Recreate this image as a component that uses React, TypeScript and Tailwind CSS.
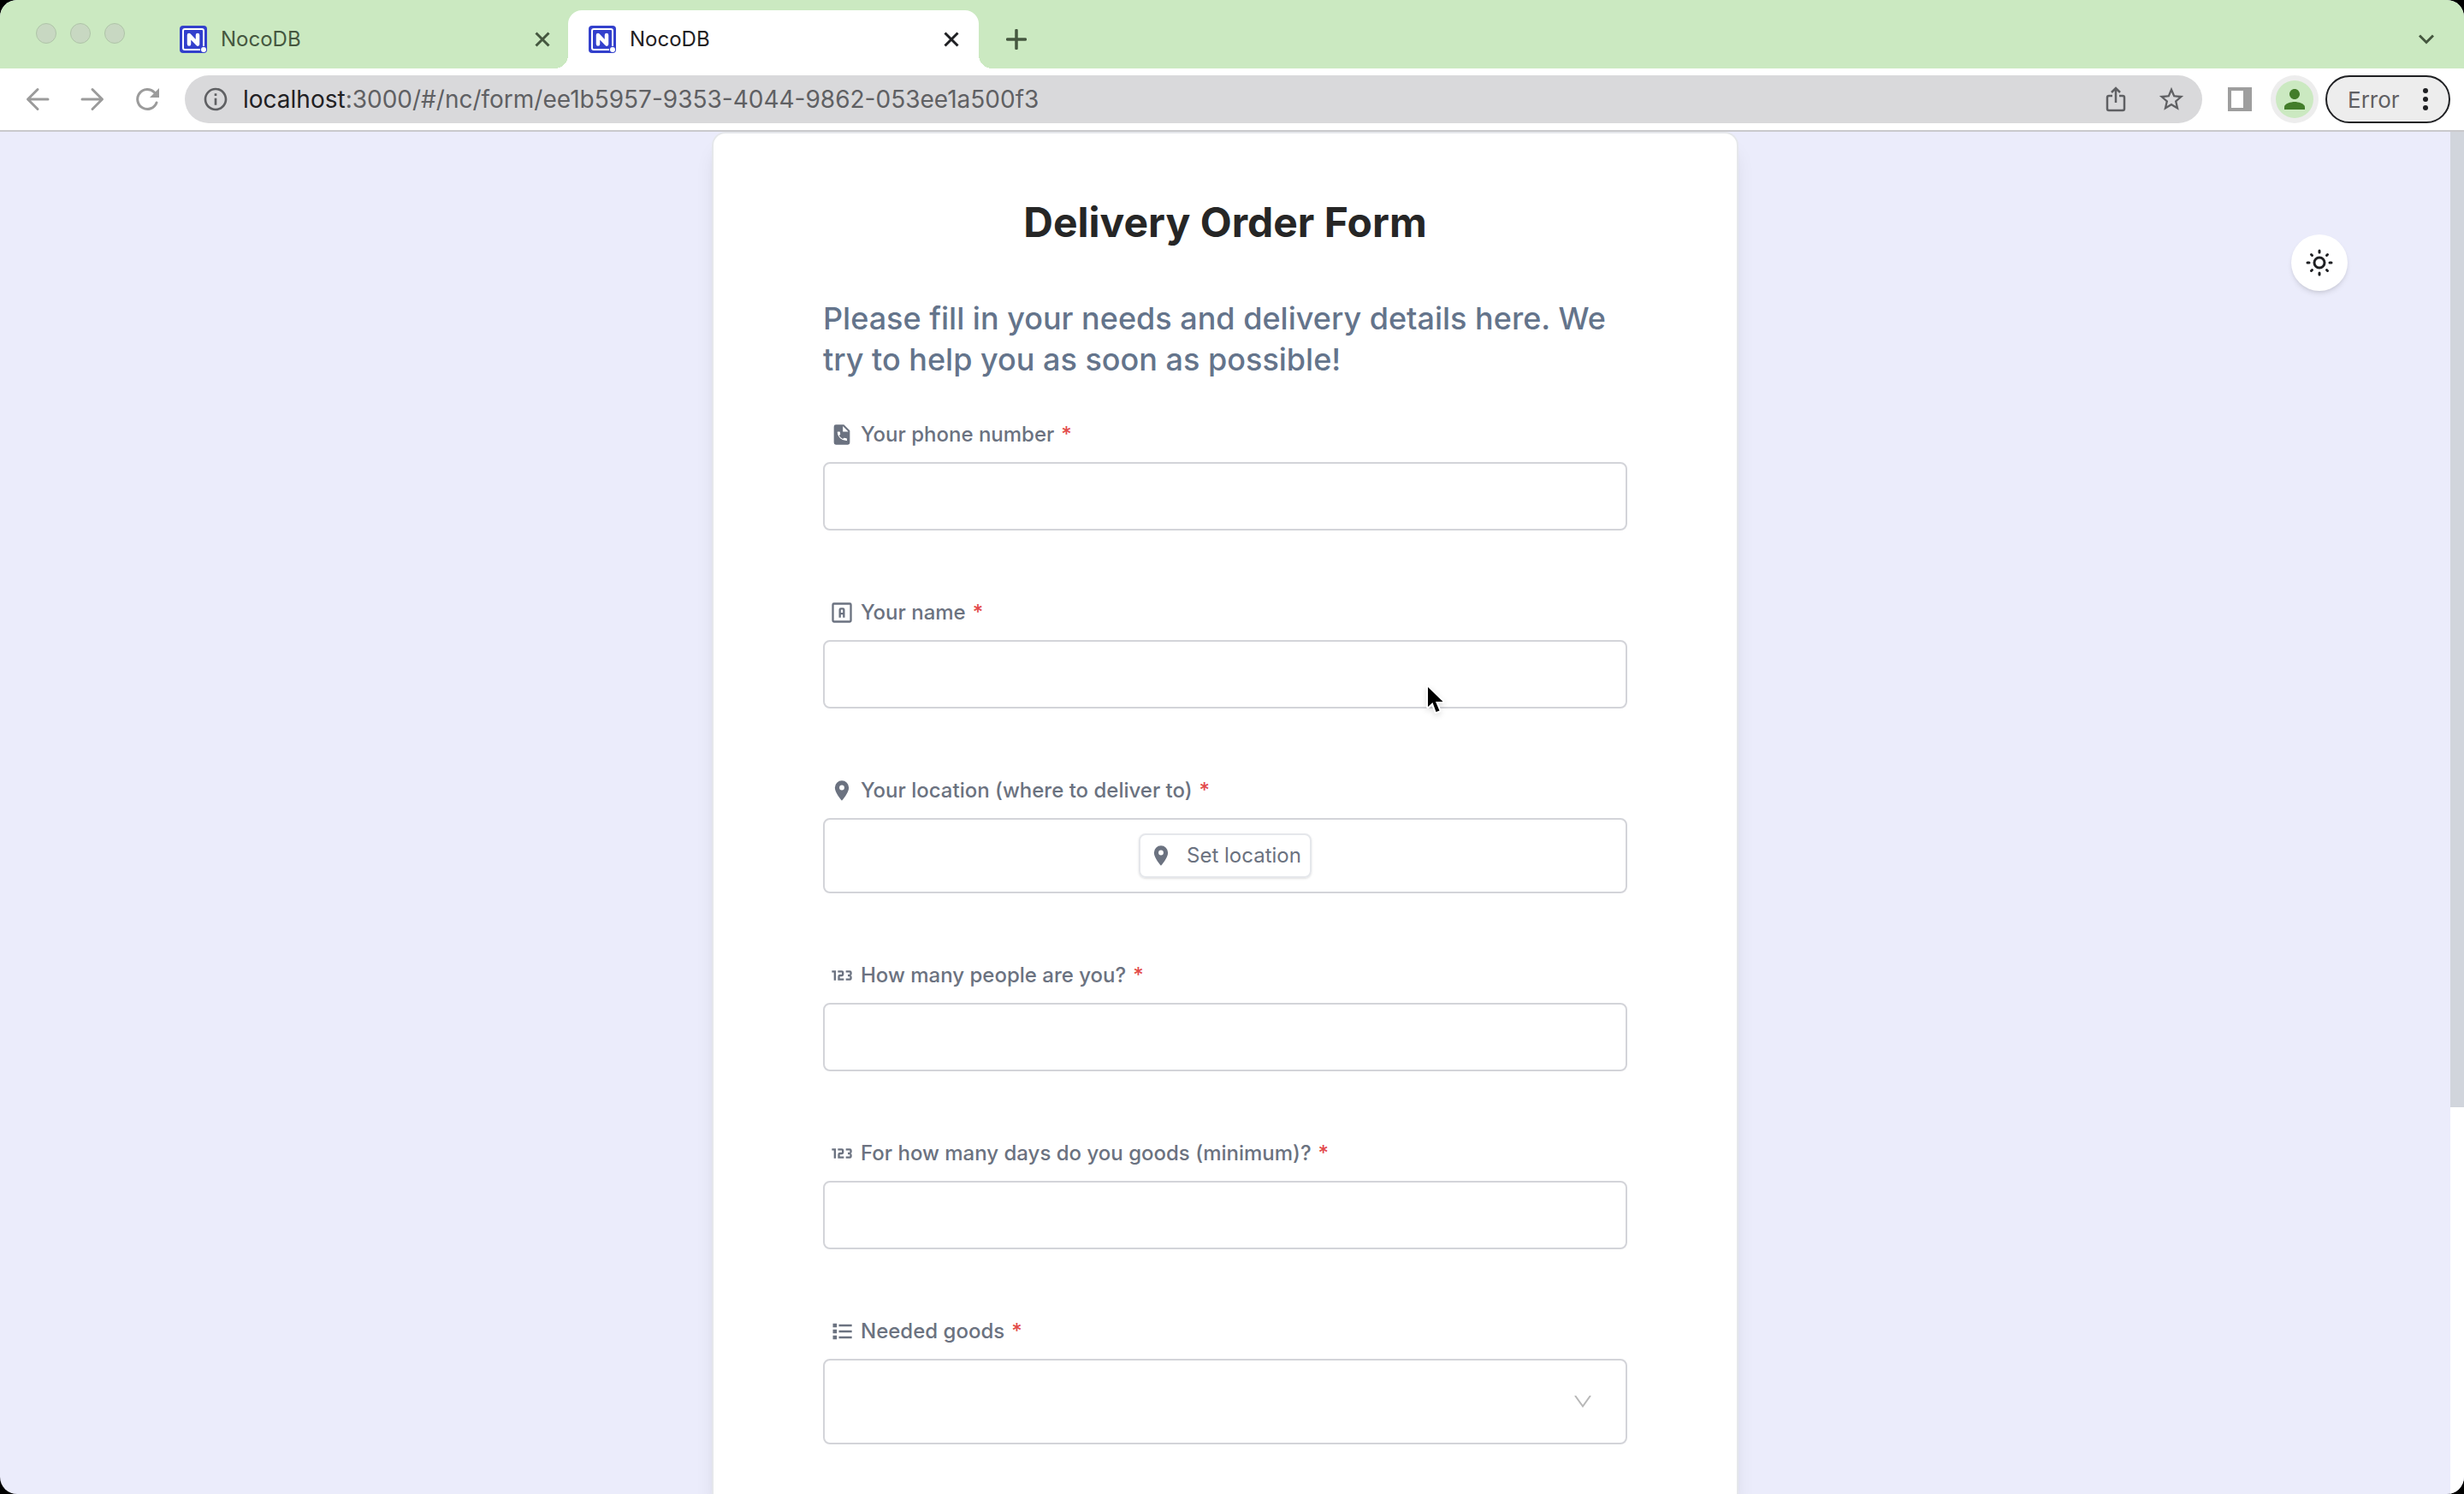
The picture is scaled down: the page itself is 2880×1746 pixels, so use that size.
import { useId } from "react";
import type { ReactNode } from "react";
import { MdOutlineInfo, MdPerson, MdStarBorder } from "react-icons/md";

function NocoLogo() {
  return (
    <svg viewBox="0 0 32 32" className="size-8 shrink-0" aria-hidden="true">
      <rect width="32" height="32" rx="4" fill="#3340cc" />
      <path d="M24 28H6a2 2 0 0 1-2-2V6a2 2 0 0 1 2-2h20a2 2 0 0 1 2 2v18" fill="none" stroke="#fff" strokeWidth="2" />
      <circle cx="28" cy="28" r="3" fill="#fff" />
      <path d="M11 21.500V11l10 10.500V11" fill="none" stroke="#fff" strokeWidth="4.500" strokeLinecap="round" strokeLinejoin="round" />
    </svg>
  );
}

function CloseIcon() {
  return (
    <svg viewBox="0 0 18 18" className="size-[18px]" aria-hidden="true">
      <path d="M1.500 1.500l15 15M16.500 1.500l-15 15" stroke="currentColor" strokeWidth="3" />
    </svg>
  );
}

function BackIcon() {
  return (
    <svg viewBox="0 0 40 40" className="size-10" fill="none" stroke="currentColor" strokeWidth="3" strokeLinecap="round" strokeLinejoin="round" aria-hidden="true">
      <path d="M32 20H9M20 8.500L8.500 20 20 31.500" />
    </svg>
  );
}

function ForwardIcon() {
  return (
    <svg viewBox="0 0 40 40" className="size-10" fill="none" stroke="currentColor" strokeWidth="3" strokeLinecap="round" strokeLinejoin="round" aria-hidden="true">
      <path d="M8 20h23M20 8.500L31.500 20 20 31.500" />
    </svg>
  );
}

function ReloadIcon() {
  return (
    <svg viewBox="0 0 40 40" className="size-10" aria-hidden="true">
      <path d="M31 24a11.500 11.500 0 1 1-2.500-12" fill="none" stroke="currentColor" strokeWidth="3" strokeLinecap="round" />
      <path d="M34 7v11H23z" fill="currentColor" />
    </svg>
  );
}

function Tab({ active = false }: { active?: boolean }) {
  return (
    <div
      className={
        active
          ? "relative flex w-[480px] items-center gap-4 rounded-t-2xl bg-white pr-[23px] pl-6 text-[#1f2023]"
          : "flex w-[478px] items-center gap-4 pr-[21px] pl-6 text-[#45573f]"
      }
    >
      {active && (
        <>
          <span className="absolute bottom-0 -left-4 size-4 bg-[radial-gradient(circle_at_0_0,#cbe9c1_16px,#fff_16px)]" />
          <span className="absolute -right-4 bottom-0 size-4 bg-[radial-gradient(circle_at_100%_0,#cbe9c1_16px,#fff_16px)]" />
        </>
      )}
      <NocoLogo />
      <span className="flex-1 text-2xl">NocoDB</span>
      <button aria-label="Close tab">
        <CloseIcon />
      </button>
    </div>
  );
}

function PhoneFileIcon() {
  return (
    <svg viewBox="0 0 24 24" className="size-7" aria-hidden="true">
      <path d="M14 2H6a2 2 0 0 0-2 2v16a2 2 0 0 0 2 2h12a2 2 0 0 0 2-2V8l-6-6m-1 1.500L18.500 9H13V3.500" fill="currentColor" fillRule="evenodd" />
      <path d="M17.200 17.500a.5.5 0 0 1-.5.5A9 9 0 0 1 7.500 9.500a.5.5 0 0 1 .5-.5h1.700c.28 0 .5.22.5.5 0 .62.100 1.220.29 1.780.05.18.010.38-.13.510l-1.100 1.100a8.300 8.300 0 0 0 3.700 3.500l1.100-1.100c.14-.14.34-.18.510-.12.560.18 1.160.28 1.780.28.28 0 .5.22.5.5z" fill="#fff" />
    </svg>
  );
}

function TextBoxIcon() {
  return (
    <svg viewBox="0 0 24 24" className="size-7" fill="none" stroke="currentColor" strokeWidth="2" aria-hidden="true">
      <rect x="3" y="3" width="18" height="18" rx="1" />
      <path d="M10 17V9a1 1 0 0 1 1-1h2a1 1 0 0 1 1 1v8M10 13h4" />
    </svg>
  );
}

function PinIcon() {
  return (
    <svg viewBox="0 0 24 24" className="size-7" fill="currentColor" aria-hidden="true">
      <path d="M12 11.500A2.500 2.500 0 0 1 9.500 9 2.500 2.500 0 0 1 12 6.500 2.500 2.500 0 0 1 14.500 9a2.500 2.500 0 0 1-2.500 2.500M12 2a7 7 0 0 0-7 7c0 5.250 7 13 7 13s7-7.750 7-13a7 7 0 0 0-7-7z" />
    </svg>
  );
}

function NumericIcon() {
  return (
    <svg viewBox="0 0 24 24" className="size-7" fill="currentColor" aria-hidden="true">
      <path d="M4 17V9H2V7h4v10H4m18-2a2 2 0 0 1-2 2h-4v-2h4v-2h-2v-2h2V9h-4V7h4a2 2 0 0 1 2 2v1.500a1.500 1.500 0 0 1-1.500 1.500 1.500 1.500 0 0 1 1.500 1.500V15m-8 0v2H8v-4a2 2 0 0 1 2-2h2V9H8V7h4a2 2 0 0 1 2 2v2a2 2 0 0 1-2 2h-2v2h4z" />
    </svg>
  );
}

function ListIcon() {
  return (
    <svg viewBox="0 0 24 24" className="size-7" fill="currentColor" aria-hidden="true">
      <path d="M3 4h4v4H3zM3 10h4v4H3zM3 16h4v4H3zM9 5h13v2H9zM9 11h13v2H9zM9 17h13v2H9z" />
    </svg>
  );
}

function FieldLabel({ id, htmlFor, icon, text }: { id?: string; htmlFor?: string; icon: ReactNode; text: string }) {
  return (
    <label id={id} htmlFor={htmlFor} className="flex h-8 items-center gap-2 pl-2 text-2xl font-medium text-[#6b7280]">
      {icon}
      <span>{text}</span>
      <span className="text-[#e34b4b]">*</span>
    </label>
  );
}

function TextField({ icon, text }: { icon: ReactNode; text: string }) {
  const id = useId();
  return (
    <div className="flex flex-col gap-4">
      <FieldLabel htmlFor={id} icon={icon} text={text} />
      <input id={id} type="text" className="h-20 w-full rounded-lg border-2 border-[#d3d4d9] bg-white px-6 text-2xl" />
    </div>
  );
}

function LocationField() {
  const id = useId();
  return (
    <div role="group" aria-labelledby={id} className="flex flex-col gap-4">
      <FieldLabel id={id} icon={<PinIcon />} text="Your location (where to deliver to)" />
      <div className="flex h-[88px] items-center justify-center rounded-lg border-2 border-[#d3d4d9]">
        <button className="flex h-[52px] w-[202px] items-center justify-center gap-4 rounded-lg border-2 border-gray-200 text-2xl text-[#6b7280] shadow-sm">
          <PinIcon />
          Set location
        </button>
      </div>
    </div>
  );
}

function GoodsField() {
  const id = useId();
  return (
    <div className="flex flex-col gap-4">
      <FieldLabel htmlFor={id} icon={<ListIcon />} text="Needed goods" />
      <div className="relative">
        <select id={id} className="h-[100px] w-full appearance-none rounded-lg border-2 border-[#d3d4d9] bg-white px-6 text-2xl" />
        <svg
          viewBox="0 0 20 14"
          className="pointer-events-none absolute top-[43px] right-[42px] h-[14px] w-5"
          fill="none"
          stroke="#b8b8b8"
          strokeWidth="2"
          aria-hidden="true"
        >
          <path d="M1 0l9 12.500L19 0" />
        </svg>
      </div>
    </div>
  );
}

function BrowserBar() {
  return (
    <header className="shrink-0">
      <div className="flex h-20 bg-[#cbe9c1] pt-3 pl-[42px]">
        <div className="flex gap-4 pt-[15px]">
          <span className="size-6 rounded-full border border-[#afc4a8] bg-[#c8d8c2]" />
          <span className="size-6 rounded-full border border-[#afc4a8] bg-[#c8d8c2]" />
          <span className="size-6 rounded-full border border-[#afc4a8] bg-[#c8d8c2]" />
        </div>
        <div className="ml-10 flex">
          <Tab />
          <Tab active />
        </div>
        <button aria-label="New tab" className="ml-8 text-[#45573f]">
          <svg viewBox="0 0 24 24" className="size-6" aria-hidden="true">
            <path d="M12 1.500v21M1.500 12h21" stroke="currentColor" strokeWidth="3.500" strokeLinecap="round" />
          </svg>
        </button>
        <button aria-label="Search tabs" className="mr-[35px] ml-auto text-[#45573f]">
          <svg viewBox="0 0 18 12" className="h-3 w-[18px]" fill="none" aria-hidden="true">
            <path d="M1 1.500l8 8 8-8" stroke="currentColor" strokeWidth="3" />
          </svg>
        </button>
      </div>

      <div className="flex h-[74px] items-center border-b-2 border-[#c9c9cc] bg-white pr-4 pl-6">
        <nav className="flex gap-6 text-[#9b9b9b]">
          <button aria-label="Back"><BackIcon /></button>
          <button aria-label="Forward"><ForwardIcon /></button>
          <button aria-label="Reload"><ReloadIcon /></button>
        </nav>
        <div className="ml-6 flex h-14 flex-1 items-center gap-4 rounded-full bg-[#d9d9db] pr-[19px] pl-5 text-[28px] text-[#5f6063]">
          <MdOutlineInfo className="size-8 shrink-0" />
          <p className="flex-1">
            <span className="text-[#1f2023]">localhost</span>:3000/#/nc/form/ee1b5957-9353-4044-9862-053ee1a500f3
          </p>
          <button aria-label="Share" className="mr-5">
            <svg viewBox="0 0 24 32" className="h-8 w-6" fill="none" stroke="currentColor" strokeWidth="2.500" aria-hidden="true">
              <path d="M8 12H4a2 2 0 0 0-2 2v13a2 2 0 0 0 2 2h16a2 2 0 0 0 2-2V14a2 2 0 0 0-2-2h-4M12 20V3M7 8l5-5 5 5" />
            </svg>
          </button>
          <button aria-label="Bookmark" className="text-[34px]"><MdStarBorder /></button>
        </div>
        <button aria-label="Side panel" className="ml-[30px] h-7 w-7 border-4 border-r-[10px] border-[#9e9e9e]" />
        <button aria-label="Profile" className="ml-[22px] flex size-14 items-center justify-center rounded-full bg-[#ededed]">
          <span className="flex size-11 items-center justify-center rounded-full bg-[#cbe9c1] text-4xl text-[#437d2b]">
            <MdPerson />
          </span>
        </button>
        <button className="ml-2 flex h-14 w-[146px] items-center justify-between rounded-full border-2 border-[#1f2023] bg-[#ededed] pr-6 pl-6 text-[26px] text-[#5f6063]">
          Error
          <span className="flex flex-col gap-1">
            <span className="size-1.5 rounded-full bg-[#1f2023]" />
            <span className="size-1.5 rounded-full bg-[#1f2023]" />
            <span className="size-1.5 rounded-full bg-[#1f2023]" />
          </span>
        </button>
      </div>
    </header>
  );
}

export default function App() {
  return (
    <div className="h-screen bg-black font-[Inter,sans-serif]">
      <div className="relative flex h-full flex-col overflow-hidden rounded-[20px] bg-[#ebecfb]">
        <BrowserBar />
        <div className="flex min-h-0 flex-1">
          <main className="flex-1 overflow-hidden">
            <form className="mx-auto flex h-full w-[1200px] max-w-full flex-col rounded-t-2xl border-2 border-b-0 border-gray-200 bg-white px-32 pt-[72px] shadow-xl">
              <h1 className="text-center text-5xl leading-[64px] font-bold text-[#262626]">Delivery Order Form</h1>
              <p className="mt-14 text-4xl leading-[48px] font-medium text-[#64748b]">
                Please fill in your needs and delivery details here. We try to help you as soon as possible!
              </p>
              <div className="mt-12 flex flex-col gap-20">
                <TextField icon={<PhoneFileIcon />} text="Your phone number" />
                <TextField icon={<TextBoxIcon />} text="Your name" />
                <LocationField />
                <TextField icon={<NumericIcon />} text="How many people are you?" />
                <TextField icon={<NumericIcon />} text="For how many days do you goods (minimum)?" />
                <GoodsField />
              </div>
            </form>
          </main>
          <div className="w-4 shrink-0 bg-white">
            <div className="h-[1140px] bg-gray-300" />
          </div>
        </div>
        <button
          aria-label="Toggle theme"
          className="absolute top-[274px] right-[136px] flex size-[66px] items-center justify-center rounded-full bg-white text-[#1f2023] shadow-md"
        >
          <svg viewBox="0 0 32 32" className="size-8" fill="none" stroke="currentColor" strokeWidth="3" strokeLinecap="round" aria-hidden="true">
            <circle cx="16" cy="16" r="6" />
            <path d="M16 2v2M16 28v2M2 16h2M28 16h2M6.500 6.500l1 1M24.500 24.500l1 1M6.500 25.500l1-1M24.500 7.500l1-1" />
          </svg>
        </button>
        <svg viewBox="0 0 26 38" className="pointer-events-none absolute top-[800px] left-[1666px] h-[38px] w-[26px] drop-shadow-md" aria-hidden="true">
          <path d="M3 3v23l5.500-5 4 11 4-1.500-4.500-10.500h8.500z" fill="#000" stroke="#fff" strokeWidth="4" strokeLinejoin="round" paintOrder="stroke" />
        </svg>
      </div>
    </div>
  );
}
